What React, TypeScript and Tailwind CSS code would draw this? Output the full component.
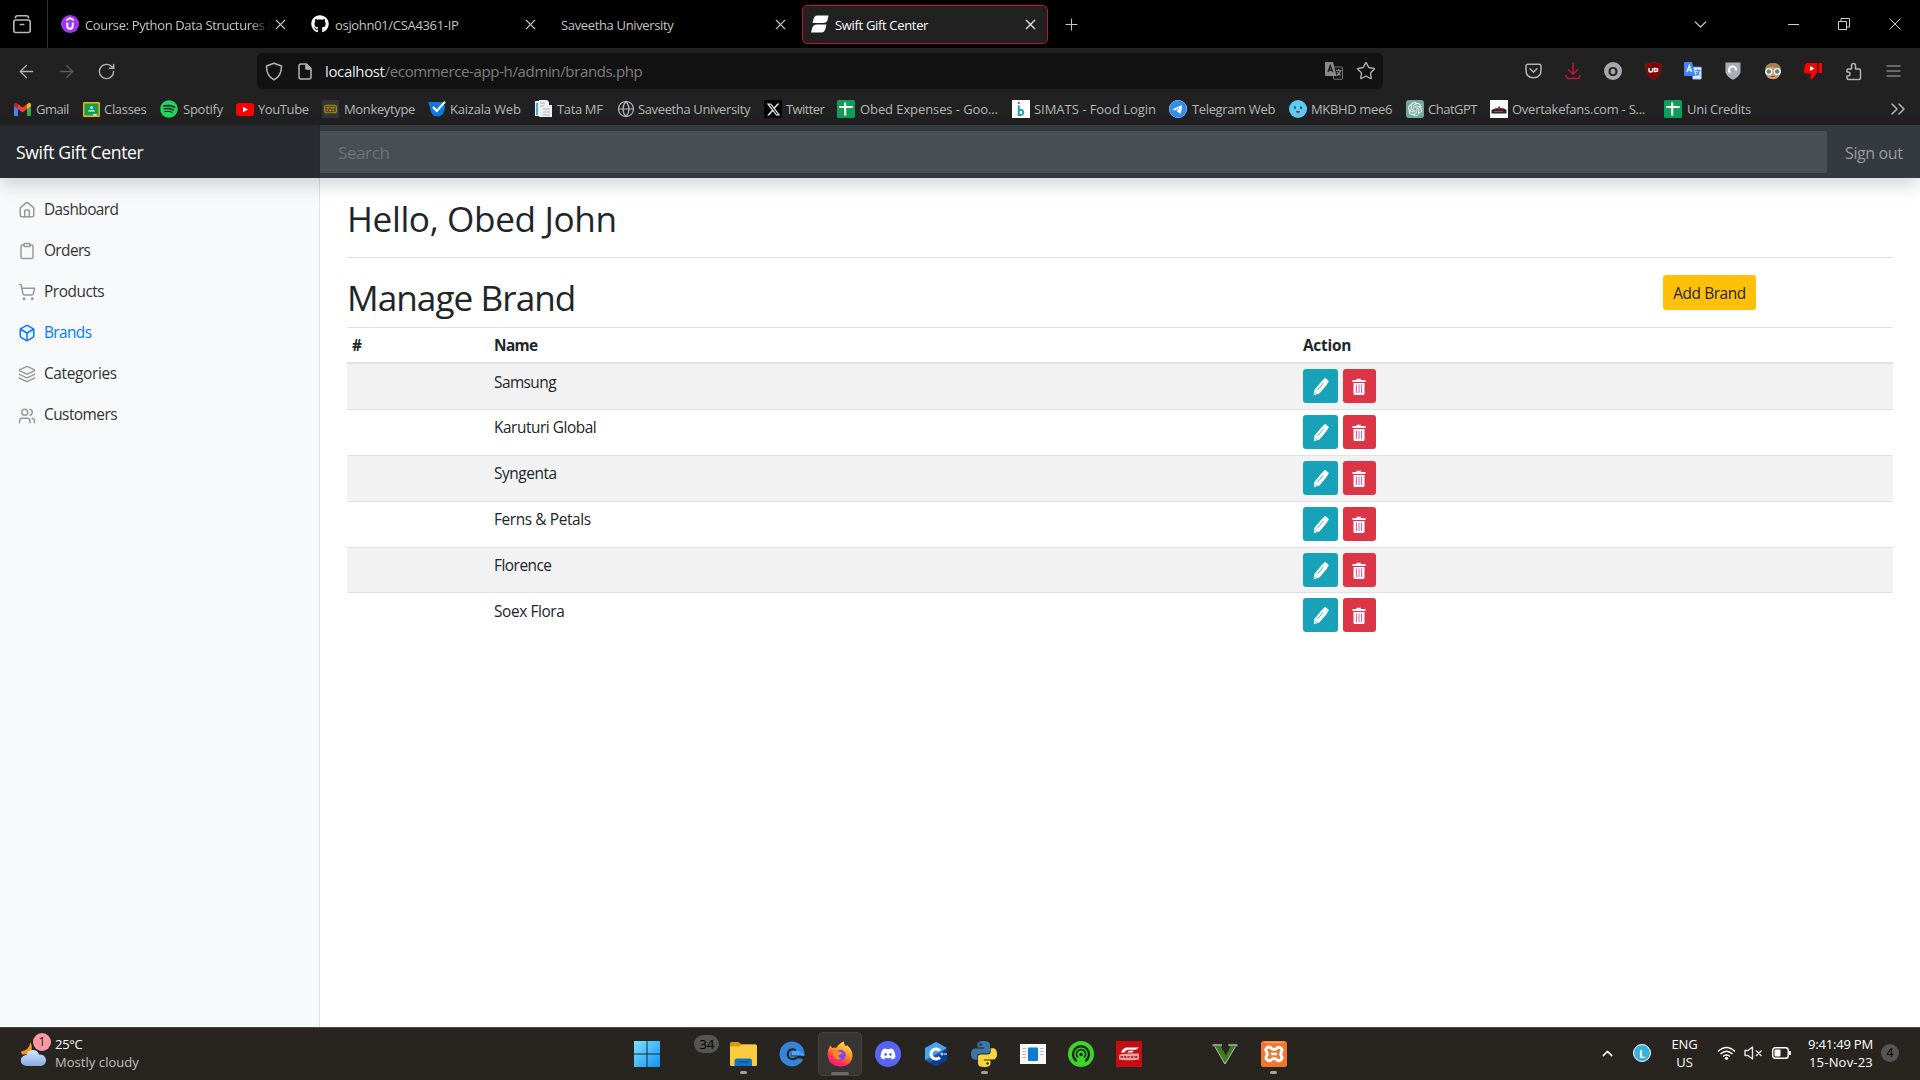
import React from "react";
import {
  ArrowLeft, ArrowRight, Box, ChevronDown, ChevronUp, ChevronsRight, Clipboard,
  Globe, House, Layers, Menu, Plus, RotateCw, ShoppingCart, Star, Users, X,
} from "lucide-react";
import { FaGithub, FaSpotify, FaXTwitter, FaDiscord, FaTelegram } from "react-icons/fa6";
import { SiOpenai } from "react-icons/si";

type Kids = { children?: React.ReactNode };

/* ---------- Favicons ---------- */

const Udemy = () => (
  <svg width="18" height="18" viewBox="0 0 18 18">
    <circle cx="9" cy="9" r="9" fill="#a435f0" />
    <path d="M5.2 5.2 9 3l3.8 2.2M6.3 7.5v3.6a2.7 2.7 0 0 0 5.4 0V7.5" fill="none" stroke="#fff" strokeWidth="1.9" />
  </svg>
);

const SwiftLogo = () => (
  <svg width="18" height="18" viewBox="0 0 18 18" fill="#fff">
    <path d="M6 .5h11.6l-1 4.2Q15.800 8 12 8H1.500l1-4Q3.500 .5 6 .5ZM5.600 9.500H15.500l-1 4Q13.500 17.500 10.500 17.500H0l1.200-4.500Q2.200 9.500 5.600 9.500Z" />
  </svg>
);

const Gmail = () => (
  <svg width="17" height="13" viewBox="0 0 17 13">
    <path d="M0 2v10q0 1 1 1h3V5Z" fill="#4285f4" />
    <path d="M17 2v10q0 1-1 1h-3V5Z" fill="#34a853" />
    <path d="M13 1.200V6l4-3V1.800C17 .2 15.300-.4 14 .5Z" fill="#fbbc04" />
    <path d="M4 1.200 8.500 4.600 13 1.200V6L8.500 9.400 4 6Z" fill="#ea4335" />
    <path d="M4 1.200V6L0 3V1.800C0 .2 1.700-.4 3 .5Z" fill="#c5221f" />
  </svg>
);

const Classroom = () => (
  <svg width="17" height="15" viewBox="0 0 17 15">
    <rect width="17" height="15" rx="1.200" fill="#f4b400" />
    <rect x="1.500" y="1.500" width="14" height="12" fill="#0f9d58" />
    <circle cx="8.500" cy="5.500" r="1.300" fill="#fff" />
    <path d="M5 9.500q0-1.800 3.500-1.800t3.500 1.800Z" fill="#d7f0e3" />
    <rect x="10" y="12" width="4" height="1.500" fill="#f1f1f1" />
  </svg>
);

const Spotify = () => <FaSpotify size={18} color="#1ed760" />;

const Youtube = () => (
  <svg width="18" height="13" viewBox="0 0 18 13">
    <rect width="18" height="13" rx="3" fill="#f00" />
    <path d="M7 3.700v5.600l5-2.800Z" fill="#fff" />
  </svg>
);

const Monkeytype = () => (
  <svg width="17" height="18" viewBox="0 0 17 18">
    <rect width="17" height="18" fill="#323437" />
    <rect x="2.500" y="5.200" width="12" height="7.600" rx="2" fill="#5b4e1c" stroke="#a3871a" strokeWidth="1.100" />
    <path d="M4.500 7.700h3M9 7.700h3.500M4.500 10.300h1.500M7.200 10.300h2M10.500 10.300H12" stroke="#c09c14" strokeWidth="1.100" />
  </svg>
);

const Kaizala = () => (
  <svg width="18" height="16" viewBox="0 0 18 16">
    <path d="M0 1h14l3 4q0 10-7.500 10.500Q2.500 15.500 2 6Z" fill="#0f7be0" />
    <path d="m5 6 3.800 4L17 .800" fill="none" stroke="#fff" strokeWidth="2.200" />
  </svg>
);

const TataMF = () => (
  <svg width="18" height="18" viewBox="0 0 18 18">
    <path d="M0 1h4V0h8l2 2v3h3v12H4v-1H0Z" fill="#eef1f4" />
    <path d="M2 3v12" stroke="#58a6d8" strokeWidth="2" />
    <path d="M5 3h5M5 6h4M8 9h7M8 12h7M8 15h7" stroke="#c3c8ce" strokeWidth="1.300" />
  </svg>
);

const Twitter = () => (
  <span className="flex size-[18px] items-center justify-center bg-black"><FaXTwitter size={15} color="#e8e8e8" /></span>
);

const Sheets = () => (
  <svg width="18" height="18" viewBox="0 0 18 18">
    <rect width="18" height="18" rx="1.500" fill="#0f9d58" />
    <path d="M2.300 7h13.400M8.200 2.500v13" stroke="#fff" strokeWidth="2.100" />
  </svg>
);

const Simats = () => (
  <svg width="18" height="18" viewBox="0 0 18 18">
    <rect width="18" height="18" fill="#fff" />
    <circle cx="6.800" cy="3" r="1.200" fill="#ef4b5f" />
    <path d="M6.800 5.500V15h1.700a2.600 2.600 0 1 0-1.500-4.600" fill="none" stroke="#1a9fb5" strokeWidth="2" />
  </svg>
);

const Telegram = () => (
  <span className="flex size-[18px] rounded-full bg-white"><FaTelegram size={18} color="#2f8ef0" /></span>
);

const Mee6 = () => (
  <svg width="18" height="18" viewBox="0 0 18 18">
    <circle cx="9" cy="9" r="9" fill="#5bcbf5" />
    <path d="M6 6.500v2.200M12 6.500v2.200" stroke="#16252f" strokeWidth="1.500" />
    <path d="M7 11h4q0 2-2 2t-2-2Z" fill="#a3262b" />
  </svg>
);

const ChatGPT = () => (
  <span className="flex size-[18px] items-center justify-center rounded-[3px] bg-[#74aa9c]"><SiOpenai size={14} color="#fff" /></span>
);

const Overtake = () => (
  <svg width="18" height="18" viewBox="0 0 18 18">
    <rect width="18" height="18" fill="#fafafa" />
    <path d="M1.500 10 5 8.500l3-.5 1-2 1.500 2 3.500.500 2.500 1.500v3.500h-15Z" fill="#2b2b30" />
    <path d="M4 11.500h9M7.500 8.500h3" stroke="#c0392b" strokeWidth="1.100" />
  </svg>
);

/* ---------- Tab strip ---------- */

type TabProps = { icon?: React.ReactNode; title: string; track: string; active?: boolean; fade?: boolean };

const Tab = ({ icon, title, track, active, fade }: TabProps) => (
  <div
    className={`flex h-[39px] w-[246px] items-center rounded-[5px] border pl-[8px] pr-[8px] ${
      active ? "border-[#c4103a] bg-[#212121] text-[#fbfbfe]" : "border-transparent text-[#c4c4c4]"
    }`}
  >
    {icon && <span className="mr-[6px] flex size-[18px] shrink-0 items-center justify-center">{icon}</span>}
    <span className={`min-w-0 flex-1 overflow-hidden whitespace-nowrap pt-[2px] text-[13px] leading-[20px] ${track} ${fade ? "[mask-image:linear-gradient(to_right,black_88%,transparent_100%)]" : ""}`}>
      {title}
    </span>
    <X className="shrink-0" size={17} strokeWidth={1.6} />
  </div>
);

const TabStrip = () => (
  <div className="flex h-[48px] items-center bg-black">
    <div className="flex h-full w-[48px] items-center justify-center border-r border-[#333] pr-[4px] text-[#b8b8b8]">
      <svg width="20" height="20" viewBox="0 0 20 20" fill="none" stroke="currentColor" strokeWidth="1.600" strokeLinecap="round">
        <rect x="1.800" y="6" width="16.400" height="12.500" rx="2" />
        <path d="M3.500 3.800q0-2 2-2h9q2 0 2 2M8.300 10.500h3.400" />
      </svg>
    </div>
    <div className="ml-[4px] flex gap-[4px]">
      <Tab icon={<Udemy />} title="Course: Python Data Structures &" track="tracking-[-0.36px]" fade />
      <Tab icon={<FaGithub size={18} color="#fff" />} title="osjohn01/CSA4361-IP" track="tracking-[-0.32px]" />
      <Tab title="Saveetha University" track="tracking-[-0.35px]" />
      <Tab icon={<SwiftLogo />} title="Swift Gift Center" track="tracking-[-0.33px]" active />
    </div>
    <Plus className="ml-[14px] text-[#c4c4c4]" size={19} strokeWidth={1.400} />
    <div className="ml-auto flex items-center text-[#d0d0d0]">
      <ChevronDown className="mr-[77px]" size={21} strokeWidth={1.500} />
      <span className="mr-[39px] h-px w-[11px] bg-[#d0d0d0]" />
      <svg className="mr-[39px]" width="12" height="12" viewBox="0 0 12 12" fill="none" stroke="currentColor">
        <path d="M.5 3.500h8v8h-8ZM3 3V.5h8.500V9H9" />
      </svg>
      <svg className="mr-[19px]" width="12" height="12" viewBox="0 0 12 12" stroke="currentColor"><path d="m.5.5 11 11M11.500.5l-11 11" /></svg>
    </div>
  </div>
);

/* ---------- Navigation bar ---------- */

const Slot = ({ children }: Kids) => <span className="flex w-[40px] items-center justify-center">{children}</span>;

const Translate = ({ a, b }: { a: string; b: string }) => (
  <svg width="18" height="18" viewBox="0 0 18 18">
    <rect x="8.500" y="5" width="9" height="12.300" rx="1" fill={b} stroke={a} strokeWidth=".8" />
    <path d="M11 8.500h5.500M13.700 7v1.500M15.500 8.500q-1 4-4 5M12 10l3.500 3.500" stroke={a} strokeWidth="1.100" fill="none" />
    <path d="M1 0h7l3.500 14H1q-1 0-1-1V1Q0 0 1 0Z" fill={a} />
    <path d="m3 10 2.300-6.500L7.600 10M3.700 8h3.200" fill="none" stroke={b} strokeWidth="1.400" />
  </svg>
);

const NavBar = () => (
  <div className="flex h-[48px] items-center bg-[#212121] pb-[2px] text-[#b4b4b4]">
    <div className="flex w-[257px] items-center pl-[6px]">
      <Slot><ArrowLeft size={21} strokeWidth={1.600} /></Slot>
      <Slot><ArrowRight className="text-[#5c5c5c]" size={21} strokeWidth={1.600} /></Slot>
      <Slot><RotateCw size={19} strokeWidth={1.800} /></Slot>
    </div>
    <div className="flex h-[36px] w-[1126px] items-center rounded-[5px] bg-[#121212] pl-[8px] pr-[7px]">
      <svg width="18" height="19" viewBox="0 0 18 19" fill="none" stroke="currentColor" strokeWidth="1.500" strokeLinejoin="round">
        <path d="M9 1.200 16.500 4c0 6-1.500 11-7.500 13.800C3 15 1.500 10 1.500 4Z" />
      </svg>
      <svg className="ml-[15px]" width="14" height="17" viewBox="0 0 14 17" fill="none" stroke="currentColor" strokeWidth="1.500" strokeLinejoin="round">
        <path d="M3 1h5.500l4.500 4.500V14q0 2-2 2H3q-2 0-2-2V3q0-2 2-2Z" />
        <path d="M8 1v5h5" fill="currentColor" />
      </svg>
      <span className="ml-[13px] text-[15px] leading-[22px] tracking-[-0.36px] text-[#7e7e7e]">
        <span className="text-[#eaeaea]">localhost</span>/ecommerce-app-h/admin/brands.php
      </span>
      <span className="ml-auto"><Translate a="#8a8a8a" b="#1a1a1a" /></span>
      <Star className="ml-[13px]" size={20} strokeWidth={1.600} />
    </div>
    <div className="ml-auto flex pr-[7px]">
      <Slot>
        <svg width="17" height="16" viewBox="0 0 17 16" fill="none" stroke="currentColor" strokeWidth="1.500" strokeLinecap="round">
          <path d="M3 1.200h11q2 0 2 2v4q0 7.300-7.500 7.600Q1 14.500 1 7.200v-4q0-2 2-2ZM5 5.800l3.500 3.500L12 5.800" />
        </svg>
      </Slot>
      <Slot>
        <svg width="16" height="18" viewBox="0 0 16 18" fill="none" stroke="#c4103a" strokeWidth="1.500" strokeLinecap="round">
          <path d="M8 1v11M3.500 7.800 8 12.200l4.500-4.400M1 13.500q0 3 3 3h8q3 0 3-3" />
        </svg>
      </Slot>
      <Slot>
        <span className="flex size-[18px] items-center justify-center rounded-full bg-[#a8a8a8] text-[13px] font-bold leading-none text-[#212121]">O</span>
      </Slot>
      <Slot>
        <svg width="17" height="18" viewBox="0 0 17 18">
          <path d="M8.500.3 16.300 2.500Q17 13 8.500 17.700 0 13 .7 2.500Z" fill="#800000" stroke="#a02828" strokeWidth=".5" />
          <path d="M4 6v2.200q0 1.800 1.800 1.800t1.800-1.800V6M9.500 6.500v3h1.200q2 0 2-1.500t-2-1.500Z" fill="none" stroke="#fff" strokeWidth="1.400" />
        </svg>
      </Slot>
      <Slot><Translate a="#4285f4" b="#e4e9f2" /></Slot>
      <Slot>
        <svg width="16" height="18" viewBox="0 0 16 18">
          <path d="M.5.5h15v10Q13.500 15.500 8 17.800 2.500 15.500.5 10.500Z" fill="#a9adba" />
          <path d="M5.500 10.800A3.500 3.500 0 1 1 11 8.500" fill="none" stroke="#fff" strokeWidth="2" />
        </svg>
      </Slot>
      <Slot>
        <svg width="18" height="18" viewBox="0 0 18 18">
          <circle cx="9" cy="9.300" r="8" fill="#d49a70" />
          <path d="M1 8.500Q1 1 9 1t8 7.500q-2-3.300-8-3.500Q3 5.200 1 8.500Z" fill="#a5814f" />
          <circle cx="4.800" cy="9.500" r="2.900" fill="#58828d" stroke="#e8f7fa" strokeWidth="1.400" />
          <circle cx="13.200" cy="9.500" r="2.900" fill="#58828d" stroke="#e8f7fa" strokeWidth="1.400" />
          <path d="M7 14.500h4" stroke="#8d4e35" />
        </svg>
      </Slot>
      <Slot>
        <svg width="18" height="17" viewBox="0 0 18 17" fill="#f00">
          <path d="M3 0h10v10l-5 6.500q-2-.5-1.500-3l.5-3H1.500Q0 10.500 0 9Q0 4 1.200 1.500 2 0 3 0ZM14.500 0H18v10h-3.500Z" />
          <path d="M6 3v5l4.500-2.500Z" fill="#fff" />
        </svg>
      </Slot>
      <Slot>
        <svg width="17" height="19" viewBox="0 0 17 19" fill="none" stroke="currentColor" strokeWidth="1.500" strokeLinejoin="round">
          <path d="M3 7h3.500V3.500a2 2 0 0 1 4 0V7H14q1.500 0 1.500 1.500V16q0 1.500-1.500 1.500H3.500Q2 17.500 2 16v-2h1a2 2 0 0 0 0-4H2V8q0-1 1-1Z" />
        </svg>
      </Slot>
      <Slot>
        <svg width="15" height="12" viewBox="0 0 15 12" stroke="currentColor" strokeWidth="1.200"><path d="M.5 1h14M.5 6h14M.5 11h14" /></svg>
      </Slot>
    </div>
  </div>
);

/* ---------- Bookmarks ---------- */

const bookmarks: { icon: React.ReactNode; name: string; cls: string }[] = [
  { icon: <Gmail />, name: "Gmail", cls: "w-[69px] gap-[5px] tracking-[-0.5px]" },
  { icon: <Classroom />, name: "Classes", cls: "w-[78px] gap-[4px] tracking-[-0.3px]" },
  { icon: <Spotify />, name: "Spotify", cls: "w-[76px] gap-[5px] tracking-[-0.24px]" },
  { icon: <Youtube />, name: "YouTube", cls: "w-[85px] gap-[4px] tracking-[-0.4px]" },
  { icon: <Monkeytype />, name: "Monkeytype", cls: "w-[107px] gap-[5px] tracking-[-0.35px]" },
  { icon: <Kaizala />, name: "Kaizala Web", cls: "w-[107px] gap-[4px] tracking-[-0.2px]" },
  { icon: <TataMF />, name: "Tata MF", cls: "w-[82px] gap-[4px] tracking-[-0.36px]" },
  { icon: <Globe size={18} strokeWidth={1.600} />, name: "Saveetha University", cls: "w-[147px] gap-[3px] tracking-[-0.37px]" },
  { icon: <Twitter />, name: "Twitter", cls: "w-[73px] gap-[4px] tracking-[-0.6px]" },
  { icon: <Sheets />, name: "Obed Expenses - Goo...", cls: "w-[175px] gap-[5px] tracking-[-0.09px]" },
  { icon: <Simats />, name: "SIMATS - Food Login", cls: "w-[157px] gap-[4px] tracking-[-0.03px]" },
  { icon: <Telegram />, name: "Telegram Web", cls: "w-[120px] gap-[5px] tracking-[-0.36px]" },
  { icon: <Mee6 />, name: "MKBHD mee6", cls: "w-[117px] gap-[4px] tracking-[-0.35px]" },
  { icon: <ChatGPT />, name: "ChatGPT", cls: "w-[84px] gap-[4px] tracking-[-0.49px]" },
  { icon: <Overtake />, name: "Overtakefans.com - S...", cls: "w-[174px] gap-[4px] tracking-[-0.25px]" },
  { icon: <Sheets />, name: "Uni Credits", cls: "w-[100px] gap-[5px] tracking-[-0.27px]" },
];

const BookmarksBar = () => (
  <div className="flex h-[29px] items-center bg-[#212121] pb-[3px] pl-[13px] text-[#b6b6b6]">
    {bookmarks.map((b, i) => (
      <div key={i} className={`flex shrink-0 items-center whitespace-nowrap text-[13px] leading-[20px] ${b.cls}`}>
        <span className="flex size-[18px] shrink-0 items-center justify-center">{b.icon}</span>
        {b.name}
      </div>
    ))}
    <ChevronsRight className="ml-auto mr-[10px]" size={24} strokeWidth={1.500} />
  </div>
);

/* ---------- Admin page ---------- */

const Header = () => (
  <header className="relative z-10 flex h-[53px] items-center bg-[#343a40] shadow-[0_8px_16px_rgba(0,0,0,0.15)]">
    <div className="flex h-full w-[320px] items-center border-r border-[#23272b] bg-[#272b30] pl-[16px] pt-px text-[17.6px] tracking-[-0.36px] text-white">Swift Gift Center</div>
    <div className="flex h-[42px] flex-1 items-center bg-[#494e53] pl-[18px] pt-[2px] text-[17px] tracking-[-0.4px] text-[#6c757d]">Search</div>
    <div className="w-[93px] pl-[18px] pt-[2px] text-[16px] tracking-[-0.39px] text-[#999ca0]">Sign out</div>
  </header>
);

const nav = [
  { Icon: House, name: "Dashboard", track: "tracking-[-0.55px]" },
  { Icon: Clipboard, name: "Orders", track: "tracking-[-0.6px]" },
  { Icon: ShoppingCart, name: "Products", track: "tracking-[-0.45px]" },
  { Icon: Box, name: "Brands", track: "tracking-[-0.6px]", active: true },
  { Icon: Layers, name: "Categories", track: "tracking-[-0.34px]" },
  { Icon: Users, name: "Customers", track: "tracking-[-0.53px]" },
];

const Sidebar = () => (
  <nav className="w-[320px] border-r border-[#dfe0e1] bg-[#f8f9fa] pt-[10px]">
    {nav.map(({ Icon, name, track, active }) => (
      <div key={name} className={`flex h-[41.2px] items-center gap-[8px] pl-[18px] text-[15.4px] ${active ? "text-[#007bff]" : "text-[#333]"} ${track}`}>
        <Icon className={`mt-[2px] ${active ? "" : "text-[#999]"}`} size={18} strokeWidth={2} />
        <span className="pt-px">{name}</span>
      </div>
    ))}
  </nav>
);

const Pencil = () => (
  <svg width="16" height="18" viewBox="0 0 16 18">
    <path d="M.8 17.300 1.300 12 9 2.800q.8-1 1.700-.3l3.200 2.500q.8.800 0 1.700L6.400 15.500Z" fill="#fff" />
    <path d="m9.800 2 1.500-1.500q.8-.8 1.700 0l2.300 2q.8.800 0 1.700l-1.200 1.500Z" fill="#fff" />
    <path d="m4.300 12.300 6-7.200" stroke="#17a2b8" strokeWidth=".8" />
    <path d="m2 14.500 1.700 1.300" stroke="#17a2b8" strokeWidth=".7" />
  </svg>
);

const Trash = () => (
  <svg width="14" height="18" viewBox="0 0 14 18">
    <path d="M.5 2h4V.8h4.500V2h4.500v2H.5ZM1.500 5h11v10.500q0 1.500-1.200 1.500H2.700q-1.200 0-1.200-1.500Z" fill="#fff" />
    <path d="M4.500 6.500v8.500M7 6.500v8.500M9.500 6.500v8.500" stroke="#e65aa8" strokeWidth="1" />
  </svg>
);

const brands = [
  { name: "Samsung", track: "tracking-[-0.55px]" },
  { name: "Karuturi Global", track: "tracking-[-0.45px]" },
  { name: "Syngenta", track: "tracking-[-0.42px]" },
  { name: "Ferns & Petals", track: "tracking-[-0.38px]" },
  { name: "Florence", track: "tracking-[-0.5px]" },
  { name: "Soex Flora", track: "tracking-[-0.4px]" },
];

const cols = "grid grid-cols-[142px_809px_1fr] pl-[5px]";

const BrandTable = () => (
  <div className="text-[15.4px] text-[#212529]">
    <div className={`${cols} h-[37px] items-center border-b-2 border-t border-[#dee2e6] pt-px font-bold tracking-[-0.6px]`}>
      <span>#</span>
      <span>Name</span>
      <span className="tracking-[-0.25px]">Action</span>
    </div>
    {brands.map((b, i) => (
      <div key={b.name} className={`${cols} h-[45.9px] ${i < brands.length - 1 ? "border-b border-[#dee2e6]" : ""} ${i % 2 === 0 ? "bg-[#f2f2f2]" : ""}`}>
        <span />
        <span className={`pt-[6.5px] leading-[24px] ${b.track}`}>{b.name}</span>
        <span className="flex gap-[5px] pt-[5px]">
          <span className="flex h-[34px] w-[35px] items-center justify-center rounded-[3px] bg-[#17a2b8] pt-[2px]"><Pencil /></span>
          <span className="flex h-[34px] w-[33px] items-center justify-center rounded-[3px] bg-[#dc3545] pr-px pt-[2px]"><Trash /></span>
        </span>
      </div>
    ))}
  </div>
);

const Main = () => (
  <main className="flex-1 bg-white pl-[27px] pr-[27px] text-[#212529]">
    <div className="h-[80px] border-b border-[#dee2e6] pt-[19px] text-[35.2px] leading-[42px] tracking-[-0.4px]">Hello, Obed John</div>
    <div className="flex h-[69px] justify-between pt-[17px]">
      <h2 className="pt-px text-[35.2px] leading-[42px] tracking-[-0.98px]">Manage Brand</h2>
      <button className="mr-[137px] h-[35px] w-[93px] rounded-[3px] bg-[#ffc107] pt-[2px] text-[15.4px] tracking-[-0.42px] text-[#212529]">Add Brand</button>
    </div>
    <BrandTable />
  </main>
);

/* ---------- Windows taskbar ---------- */

const App48 = ({ children, running }: Kids & { running?: boolean }) => (
  <span className="relative flex h-full w-[48.200px] items-center justify-center pb-px">
    {children}
    {running && <span className="absolute bottom-[6px] h-[3px] w-[7px] rounded-full bg-[#a3a2a0]" />}
  </span>
);

const WindowsLogo = () => (
  <svg width="26" height="26" viewBox="0 0 26 26">
    <defs>
      <linearGradient id="win" x1="0" y1="0" x2="1" y2="1"><stop stopColor="#7fe2ff" /><stop offset="1" stopColor="#0f93f5" /></linearGradient>
    </defs>
    <path d="M0 0h12.500v12.500H0ZM13.500 0H26v12.500H13.500ZM0 13.500h12.500V26H0ZM13.500 13.500H26V26H13.500Z" fill="url(#win)" />
  </svg>
);

const Folder = () => (
  <svg width="27" height="26" viewBox="0 0 27 26">
    <path d="M0 2.500Q0 1 1.500 1h7.300l2.500 2.500H25q2 0 2 2V8H0Z" fill="#d99b0c" />
    <path d="M0 5.500h9l2.200-2H25.500Q27 3.500 27 5v18.500Q27 25 25.500 25h-24Q0 25 0 23.500Z" fill="#fdcb3e" />
    <path d="M4.500 25v-5q0-2.500 2.500-2.500h12.500q2.500 0 2.500 2.500v5Z" fill="#0f74c4" />
    <path d="M8.500 21h10" stroke="#0a4f8d" strokeWidth="1.200" />
  </svg>
);

const EBlue = () => (
  <svg width="26" height="26" viewBox="0 0 26 26">
    <circle cx="13" cy="13" r="12.500" fill="#3484d8" />
    <path d="M13 10.500q1.500-2 5-1l7 3.500-.3 2.500H13Z" fill="#47a6ff" />
    <path d="M17 9.500a5 5 0 1 0 .5 7" fill="none" stroke="#28241f" strokeWidth="2.200" />
    <path d="M12.500 12.500 26 15v4.500L22 17.500H17l1-2h-5.500Z" fill="#28241f" />
    <path d="M13 11h6.500q4 .5 5.800 3.500H13Z" fill="#47a6ff" />
  </svg>
);

const Firefox = () => (
  <svg width="26" height="26" viewBox="0 0 26 26">
    <defs>
      <linearGradient id="ff" x1=".8" y1="0" x2=".3" y2="1"><stop stopColor="#fff04a" /><stop offset=".45" stopColor="#ff9226" /><stop offset=".75" stopColor="#ff3750" /><stop offset="1" stopColor="#f01a8b" /></linearGradient>
    </defs>
    <path d="M3.200 4.500q1 .5 2 2.500 2-1 4 0Q12 2 17 .5q-.5 3 2 5l1-1.500q5.500 5 5.500 10.500Q25 25 13 25.500 1 24.500.7 13.500.7 8 3.200 4.500Z" fill="url(#ff)" />
    <circle cx="13.500" cy="14" r="5.300" fill="#7a4be8" />
    <path d="M6 10q3-2 5.500.500 2 1 4.500.500-1.500 3-4.500 3.200-.5 3 3.500 3.300Q10 20 7.500 16.500 5.500 13.500 6 10Z" fill="#ff8a2a" />
  </svg>
);

const Cpp = () => (
  <svg width="22" height="24" viewBox="0 0 22 24">
    <path d="M11 0 22 6v12l-11 6L0 18V6Z" fill="#1565b8" />
    <path d="M11 0 22 6 11 12 0 18V6Z" fill="#4ba3ec" />
    <path d="M22 6v12l-11 6-6-3.300L15 12Z" fill="#053f94" />
    <path d="M14.800 8.800a5 5 0 1 0 0 6.400" fill="none" stroke="#fff" strokeWidth="3.200" />
    <path d="M15.500 12h3M17 10.500v3M19 12h3" stroke="#fff" />
  </svg>
);

const Python = () => (
  <svg width="26" height="26" viewBox="0 0 26 26">
    <path d="M12.800 0C7 0 6.500 2 6.500 3.500V6.500h6.700v1H4C1.500 7.500 0 9.500 0 13s1.500 5.700 4 5.700h2.300v-3q0-3.200 3.300-3.200h6.600q2.800 0 2.800-2.800V3.500Q19 0 12.800 0Z" fill="#3b77a8" />
    <path d="M13.200 26c5.800 0 6.300-2 6.300-3.500v-3h-6.700v-1H22c2.500 0 4-2 4-5.500s-1.500-5.700-4-5.700h-2.300v3q0 3.200-3.300 3.200H9.800Q7 13.500 7 16.300v6.200Q7 26 13.200 26Z" fill="#fdd43f" />
    <circle cx="9.500" cy="3.500" r="1.200" fill="#28241f" />
    <circle cx="16.500" cy="22.500" r="1.200" fill="#28241f" />
  </svg>
);

const DocWindow = () => (
  <svg width="26" height="20" viewBox="0 0 26 20">
    <rect width="26" height="20" fill="#f5f7f8" />
    <rect x="8" y="3.500" width="10" height="13.500" rx="1" fill="#0f7ad2" />
    <path d="M2.500 4.500h3.500M2.500 7.500h3.500M2.500 10.500h3.500M2.500 13.500h3.500M20 4.500h3.500M20 7.500h3.500M20 10.500h3.500" stroke="#b5bdc3" strokeWidth="1.200" />
  </svg>
);

const GreenDial = () => (
  <svg width="26" height="26" viewBox="0 0 26 26">
    <circle cx="13" cy="13" r="13" fill="#3fd42b" />
    <path d="M8 19.500a8 8 0 1 1 10 0" fill="none" stroke="#15300f" strokeWidth="2.400" strokeLinecap="round" />
    <path d="M9.500 16a4.500 4.500 0 1 1 7 0" fill="none" stroke="#15300f" strokeWidth="1.800" strokeLinecap="round" />
    <circle cx="13" cy="13.500" r="1.800" fill="#15300f" />
  </svg>
);

const F1 = () => (
  <svg width="26" height="26" viewBox="0 0 26 26">
    <rect width="26" height="26" fill="#c80d10" />
    <path d="M5 11.500q2-5 6-5h12l-3 2.300h-8q-2 0-3.500 2.700ZM13 9.700h5l-1.800 1.800h-5Z" fill="#fff" />
    <path d="M3 14q3-1.500 10-1.500t10 0v6q-3 .8-10 .8t-10-.8Z" fill="#e3a5a6" />
    <path d="M4.500 16h2.500M8 16h2.500M11.500 16h2M14.800 16h2.500M18.500 16h3" stroke="#a83a3c" strokeWidth="2" />
  </svg>
);

const VIcon = () => (
  <svg width="26" height="22" viewBox="0 0 26 22">
    <path d="M.5 1h9.500v2.500H8.800L14 12.500l4.500-9h-2V1h9v2.500h-2L13.500 21h-1L2.800 3.500H.5Z" fill="#3f7c22" />
    <path d="M.5 1h9.500v2H.5ZM16.500 1h9v2h-9Z" fill="#8d938d" />
    <path d="M2.800 3.500 13 21 23.500 3.500" fill="none" stroke="#b9bdb9" />
  </svg>
);

const Xampp = () => (
  <svg width="26" height="26" viewBox="0 0 26 26">
    <rect width="26" height="26" rx="2.500" fill="#f2762e" />
    <path d="M3 1.200h20" stroke="#ffb487" />
    <path
      d="M8 6a3 3 0 0 0-2.500 4.800Q7 13 5.500 15.200A3 3 0 0 0 10 19q3-3 6 0a3 3 0 0 0 4.500-3.800q-1.500-2.200 0-4.400A3 3 0 0 0 16 7q-3 3-6 0-.8-1-2-1Z"
      fill="none" stroke="#fff" strokeWidth="3"
    />
    <path d="M10 13h6" stroke="#fff" strokeWidth="2.500" />
  </svg>
);

const Weather = () => (
  <span className="relative ml-[21px] flex h-full w-[34px] items-center pb-px">
    <svg width="26" height="26" viewBox="0 0 26 26">
      <defs>
        <linearGradient id="cl" x1="0" y1="0" x2="0" y2="1"><stop stopColor="#d8e6fb" /><stop offset="1" stopColor="#86abe6" /></linearGradient>
      </defs>
      <path d="M9.500 1Q13 9 8 13L1 13.500 0 10.500q8-1 9.500-9.500Z" fill="#f39a1e" />
      <path d="M6 25a6 5.500 0 0 1-.5-11 6.500 6.500 0 0 1 12.500-.5A6 5.800 0 0 1 20 25Z" fill="url(#cl)" />
    </svg>
    <span className="absolute left-[12px] top-[5px] flex size-[18px] items-center justify-center rounded-full bg-[#ff98a3] text-[12px] leading-none text-[#1b1b1b]">1</span>
  </span>
);

const Taskbar = () => (
  <footer className="flex h-[53px] items-center border-t border-[#4a4744] bg-[#282521] text-[13px] text-white">
    <div className="flex h-full w-[623px] items-center">
      <Weather />
      <div className="pb-[2px] leading-[18px]">
        <div className="tracking-[-0.3px]">25°C</div>
        <div className="tracking-[0.05px] text-[#c2c0be]">Mostly cloudy</div>
      </div>
    </div>
    <App48><WindowsLogo /></App48>
    <App48>
      <span className="absolute right-0 top-[7px] flex h-[18px] w-[25px] items-center justify-center rounded-full bg-[#565554] text-[13.5px] text-black">34</span>
    </App48>
    <App48 running><Folder /></App48>
    <App48><EBlue /></App48>
    <App48>
      <span className="relative flex h-[44px] w-[44px] items-center justify-center rounded-[5px] border border-[#45423f] bg-[#383532]">
        <Firefox />
        <span className="absolute bottom-0 h-[3px] w-[18px] rounded-full bg-[#6d6b69]" />
      </span>
    </App48>
    <App48>
      <span className="flex size-[26px] items-center justify-center rounded-full bg-[#5865f2]"><FaDiscord size={16} color="#fff" /></span>
    </App48>
    <App48><Cpp /></App48>
    <App48 running><Python /></App48>
    <App48><DocWindow /></App48>
    <App48><GreenDial /></App48>
    <App48><F1 /></App48>
    <App48 />
    <App48><VIcon /></App48>
    <App48 running><Xampp /></App48>

    <div className="ml-auto flex h-full items-center pb-[2px] pr-[21px]">
      <ChevronUp size={17} strokeWidth={2} />
      <span className="ml-[17px] flex size-[18px] items-center justify-center rounded-full border-[1.500px] border-white bg-[#35b3dc] text-[11px] font-bold leading-none">L</span>
      <div className="ml-[20px] w-[27px] text-center leading-[18px] tracking-[-0.1px]">
        <div>ENG</div>
        <div>US</div>
      </div>
      <svg className="ml-[19px]" width="19" height="15" viewBox="0 0 19 15" fill="none" stroke="#fff" strokeWidth="1.400">
        <path d="M1 5.500q8.500-8 17 0M3.500 8q6-5.500 12 0M6 10.500q3.500-3 7 0" />
        <circle cx="9.500" cy="12.300" r="1.600" fill="#fff" stroke="none" />
      </svg>
      <svg className="ml-[8px]" width="19" height="14" viewBox="0 0 19 14" fill="none" stroke="#e4e3e2" strokeWidth="1.400" strokeLinejoin="round">
        <path d="M1 4.500h3L8.500 1v12L4 9.500H1ZM12 4.500l5.500 5.500M17.500 4.500 12 10" />
      </svg>
      <svg className="ml-[9px]" width="19" height="12" viewBox="0 0 19 12" fill="none" stroke="#fff" strokeWidth="1.400">
        <rect x=".7" y=".7" width="15.500" height="10.500" rx="2.500" />
        <rect x="2.500" y="2.500" width="6" height="7" rx="1" fill="#fff" stroke="none" />
        <path d="M18 4v4" strokeWidth="1.800" />
      </svg>
      <div className="ml-[16px] w-[66px] whitespace-nowrap text-right leading-[18px]">
        <div className="tracking-[-0.19px]">9:41:49 PM</div>
        <div className="tracking-[0.2px]">15-Nov-23</div>
      </div>
      <span className="ml-[8px] flex size-[18px] items-center justify-center rounded-full bg-[#565554] text-[12px] leading-none text-black">4</span>
    </div>
  </footer>
);

export default function App() {
  return (
    <div className="flex h-[1080px] w-[1920px] flex-col overflow-hidden font-['Open_Sans','Noto_Sans',sans-serif]">
      <TabStrip />
      <NavBar />
      <BookmarksBar />
      <Header />
      <div className="flex min-h-0 flex-1">
        <Sidebar />
        <Main />
      </div>
      <Taskbar />
    </div>
  );
}
